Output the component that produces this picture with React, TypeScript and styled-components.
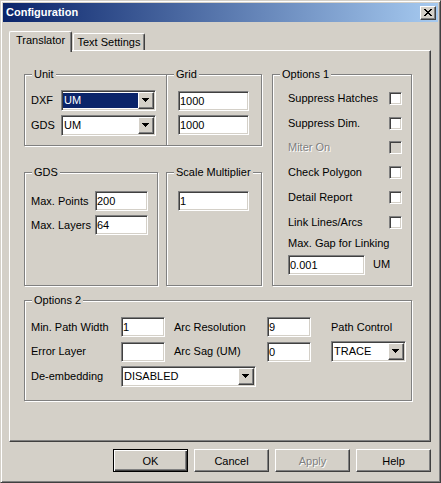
import styled, { createGlobalStyle, css } from "styled-components";

const GlobalStyle = createGlobalStyle`
  html, body {
    margin: 0;
    padding: 0;
    background: #d4d0c8;
  }
  body {
    font-family: "Liberation Sans", Arial, sans-serif;
    font-size: 11px;
    color: #000;
  }
  * {
    box-sizing: border-box;
  }
`;

const raised = css`
  border: 1px solid;
  border-color: #fff #404040 #404040 #fff;
  box-shadow: inset -1px -1px 0 #808080;
  background: #d4d0c8;
`;

const sunken = css`
  border: 1px solid;
  border-color: #808080 #fff #fff #808080;
  box-shadow: inset 1px 1px 0 #404040, inset -1px -1px 0 #d4d0c8;
`;

const Window = styled.div`
  width: 441px;
  height: 483px;
  background: #d4d0c8;
  border: 1px solid;
  border-color: #d4d0c8 #404040 #404040 #d4d0c8;
  box-shadow: inset 1px 1px 0 #fff, inset -1px -1px 0 #808080;
  padding: 2px;
  display: flex;
  flex-direction: column;
`;

const TitleBar = styled.div`
  height: 19px;
  background: linear-gradient(to right, #0a246a, #a6caf0);
  display: flex;
  align-items: center;
  justify-content: space-between;
  padding: 0 2px 0 3px;
`;

const Title = styled.span`
  color: #fff;
  font-weight: bold;
  font-size: 11px;
  line-height: 13px;
`;

const CloseButton = styled.div`
  ${raised};
  width: 16px;
  height: 14px;
  display: flex;
  align-items: center;
  justify-content: center;
  padding: 0 1px 1px 0;
`;

const Body = styled.div`
  flex: 1;
  display: flex;
  flex-direction: column;
  padding: 9px 7px 0 6px;
`;

const TabStrip = styled.div`
  height: 19px;
  display: flex;
  align-items: flex-end;
  gap: 1px;
`;

const Tab = styled.div<{ $active?: boolean; $w: number }>`
  width: ${(p) => p.$w}px;
  height: ${(p) => (p.$active ? 21 : 17)}px;
  margin-bottom: ${(p) => (p.$active ? -2 : 0)}px;
  position: relative;
  z-index: ${(p) => (p.$active ? 2 : 0)};
  background: #d4d0c8;
  border: 1px solid;
  border-bottom: none;
  border-color: #fff #404040 #404040 #fff;
  border-radius: 2px 2px 0 0;
  box-shadow: inset -1px 0 0 #808080;
  text-align: center;
  line-height: 13px;
  padding-top: 2px;
`;

const Panel = styled.div`
  height: 392px;
  border: 1px solid;
  border-color: #fff #404040 #404040 #fff;
  box-shadow: inset -1px -1px 0 #808080;
  padding: 23px 18px 0 14px;
`;

const TopArea = styled.div`
  display: grid;
  grid-template-columns: 238px 140px;
  grid-template-rows: 72px 114px;
  column-gap: 10px;
  row-gap: 26px;
`;

const GroupRow = styled.div<{ $gap: number }>`
  display: flex;
  gap: ${(p) => p.$gap}px;
`;

const Group = styled.div<{ $w?: number; $noRight?: boolean; $pad: string }>`
  position: relative;
  width: ${(p) => (p.$w ? `${p.$w}px` : "auto")};
  height: 100%;
  border: 1px solid #808080;
  ${(p) => p.$noRight && "border-right: none;"}
  box-shadow: inset 1px 1px 0 #fff, 1px 1px 0 #fff;
  padding: ${(p) => p.$pad};
`;

const Options1 = styled(Group)`
  grid-column: 2;
  grid-row: 1 / span 2;
`;

const Options2 = styled(Group)`
  height: 101px;
  margin-top: 14px;
`;

const Caption = styled.span`
  position: absolute;
  top: -7px;
  left: 7px;
  padding: 0 2px;
  background: #d4d0c8;
  line-height: 13px;
`;

const Stack = styled.div`
  display: flex;
  flex-direction: column;
  gap: 4px;
`;

const FieldRow = styled.div`
  display: flex;
  align-items: center;
`;

const Label = styled.span<{ $w?: number; $disabled?: boolean }>`
  width: ${(p) => (p.$w ? `${p.$w}px` : "auto")};
  flex-shrink: 0;
  line-height: 13px;
  white-space: nowrap;
  ${(p) =>
    p.$disabled &&
    css`
      color: #808080;
      text-shadow: 1px 1px 0 #fff;
    `}
`;

const Field = styled.input<{ $w: number }>`
  ${sunken};
  width: ${(p) => p.$w}px;
  height: 20px;
  padding: 0 1px;
  margin: 0;
  font: inherit;
  color: #000;
  background: #fff;
  outline: none;
  border-radius: 0;
`;

const Combo = styled.div<{ $w: number }>`
  ${sunken};
  width: ${(p) => p.$w}px;
  height: 21px;
  padding: 1px;
  display: flex;
  background: #fff;
`;

const ComboText = styled.span<{ $selected?: boolean }>`
  flex: 1;
  margin: 1px 0;
  padding-left: 1px;
  line-height: 15px;
  ${(p) =>
    p.$selected &&
    css`
      background: #0a246a;
      color: #fff;
    `}
`;

const DropButton = styled.span`
  ${raised};
  width: 16px;
  height: 17px;
  display: flex;
  align-items: center;
  justify-content: center;
  padding: 0 1px 1px 0;
`;

const CheckRow = styled.div`
  height: 24.8px;
  display: flex;
  align-items: center;
  justify-content: space-between;
`;

const Check = styled.span<{ $disabled?: boolean }>`
  ${sunken};
  width: 13px;
  height: 13px;
  background: ${(p) => (p.$disabled ? "#d4d0c8" : "#fff")};
`;

const GapLabel = styled.div`
  margin-top: 2px;
  line-height: 13px;
`;

const GapRow = styled.div`
  margin-top: 5px;
  display: flex;
  align-items: center;
  gap: 8px;
`;

const Opt2Grid = styled.div`
  display: grid;
  grid-template-columns: 90px 53px 93px 64px 75px;
  grid-template-rows: 20px 21px 21px;
  row-gap: 4px;
  align-items: center;
`;

const WideCell = styled.div`
  grid-column: 2 / span 3;
`;

const ButtonRow = styled.div`
  margin-top: 7px;
  display: flex;
  justify-content: flex-end;
  gap: 6px;
`;

const Button = styled.button<{ $default?: boolean }>`
  ${raised};
  width: 75px;
  height: 23px;
  padding: 0;
  font: inherit;
  color: #000;
  border-radius: 0;
  ${(p) =>
    p.$default &&
    css`
      border-color: #000;
      box-shadow: inset 1px 1px 0 #fff, inset -1px -1px 0 #404040,
        inset -2px -2px 0 #808080;
    `}
  &:disabled {
    color: #808080;
    text-shadow: 1px 1px 0 #fff;
  }
`;

const closeGlyph = [
  "11000011",
  "01100110",
  "00111100",
  "00011000",
  "00111100",
  "01100110",
  "11000011",
];

function CloseIcon() {
  return (
    <svg width="8" height="7" viewBox="0 0 8 7" shapeRendering="crispEdges">
      {closeGlyph.flatMap((row, y) =>
        row.split("").map((c, x) =>
          c === "1" ? <rect key={`${x}-${y}`} x={x} y={y} width="1" height="1" fill="#000" /> : null
        )
      )}
    </svg>
  );
}

function Arrow() {
  return (
    <svg width="7" height="4" viewBox="0 0 7 4" shapeRendering="crispEdges">
      <path d="M0 0h7v1h-7z M1 1h5v1h-5z M2 2h3v1h-3z M3 3h1v1h-1z" fill="#000" />
    </svg>
  );
}

function ComboBox({ w, value, selected }: { w: number; value: string; selected?: boolean }) {
  return (
    <Combo $w={w}>
      <ComboText $selected={selected}>{value}</ComboText>
      <DropButton>
        <Arrow />
      </DropButton>
    </Combo>
  );
}

const checks = [
  { label: "Suppress Hatches" },
  { label: "Suppress Dim." },
  { label: "Miter On", disabled: true },
  { label: "Check Polygon" },
  { label: "Detail Report" },
  { label: "Link Lines/Arcs" },
];

export default function App() {
  return (
    <>
      <GlobalStyle />
      <Window>
        <TitleBar>
          <Title>Configuration</Title>
          <CloseButton>
            <CloseIcon />
          </CloseButton>
        </TitleBar>
        <Body>
          <TabStrip>
            <Tab $active $w={63}>Translator</Tab>
            <Tab $w={72}>Text Settings</Tab>
          </TabStrip>
          <Panel>
            <TopArea>
              <GroupRow $gap={0}>
                <Group $w={142} $noRight $pad="15px 0 0 6px">
                  <Caption>Unit</Caption>
                  <Stack>
                    <FieldRow>
                      <Label $w={30}>DXF</Label>
                      <ComboBox w={95} value="UM" selected />
                    </FieldRow>
                    <FieldRow>
                      <Label $w={30}>GDS</Label>
                      <ComboBox w={95} value="UM" />
                    </FieldRow>
                  </Stack>
                </Group>
                <Group $w={96} $pad="16px 0 0 11px">
                  <Caption>Grid</Caption>
                  <Stack>
                    <Field $w={71} defaultValue="1000" />
                    <Field $w={71} defaultValue="1000" />
                  </Stack>
                </Group>
              </GroupRow>

              <Options1 $pad="11px 9px 0 15px">
                <Caption>Options 1</Caption>
                {checks.map((c) => (
                  <CheckRow key={c.label}>
                    <Label $disabled={c.disabled}>{c.label}</Label>
                    <Check $disabled={c.disabled} />
                  </CheckRow>
                ))}
                <GapLabel>Max. Gap for Linking</GapLabel>
                <GapRow>
                  <Field $w={77} defaultValue="0.001" />
                  <Label>UM</Label>
                </GapRow>
              </Options1>

              <GroupRow $gap={8}>
                <Group $w={134} $pad="18px 0 0 6px">
                  <Caption>GDS</Caption>
                  <Stack>
                    <FieldRow>
                      <Label $w={64}>Max. Points</Label>
                      <Field $w={53} defaultValue="200" />
                    </FieldRow>
                    <FieldRow>
                      <Label $w={64}>Max. Layers</Label>
                      <Field $w={53} defaultValue="64" />
                    </FieldRow>
                  </Stack>
                </Group>
                <Group $w={96} $pad="18px 0 0 11px">
                  <Caption>Scale Multiplier</Caption>
                  <Field $w={71} defaultValue="1" />
                </Group>
              </GroupRow>
            </TopArea>

            <Options2 $pad="16px 0 0 6px">
              <Caption>Options 2</Caption>
              <Opt2Grid>
                <Label>Min. Path Width</Label>
                <Field $w={44} defaultValue="1" />
                <Label>Arc Resolution</Label>
                <Field $w={44} defaultValue="9" />
                <Label>Path Control</Label>

                <Label>Error Layer</Label>
                <Field $w={44} defaultValue="" />
                <Label>Arc Sag (UM)</Label>
                <Field $w={44} defaultValue="0" />
                <ComboBox w={75} value="TRACE" />

                <Label>De-embedding</Label>
                <WideCell>
                  <ComboBox w={135} value="DISABLED" />
                </WideCell>
              </Opt2Grid>
            </Options2>
          </Panel>
          <ButtonRow>
            <Button $default>OK</Button>
            <Button>Cancel</Button>
            <Button disabled>Apply</Button>
            <Button>Help</Button>
          </ButtonRow>
        </Body>
      </Window>
    </>
  );
}
